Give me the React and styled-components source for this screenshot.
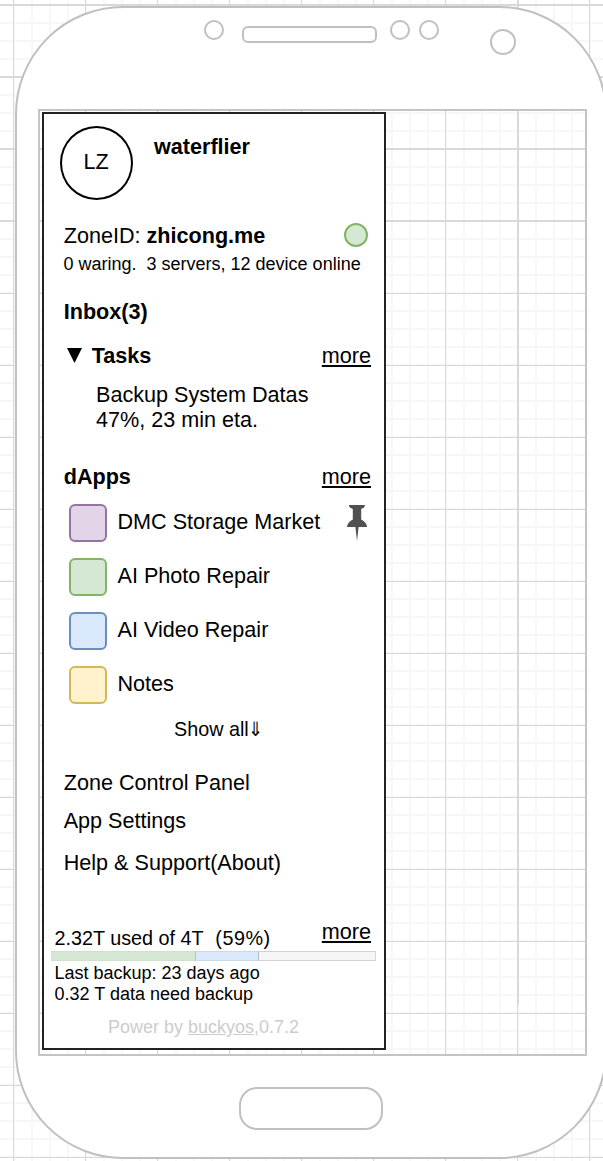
import React from "react";
import styled, { createGlobalStyle, css } from "styled-components";

const MAJOR = "#d9d9d9";
const MINOR = "#f7f7f7";
const OUTLINE = "#c0c0c0";

/* Drawing-board grid: 72px major cells split in four. x / y place the first major line;
   the rows down to heavyTo and the column beside heavyX are drawn two pixels thick. */
const grid = (x, y, heavyX, heavyTo) => css`
  background-color: #fff;
  background-image:
    linear-gradient(${MAJOR}, ${MAJOR}),
    repeating-linear-gradient(to bottom, ${MAJOR} 0 1px, transparent 1px 72px),
    linear-gradient(to right, ${MAJOR} 1px, transparent 1px),
    linear-gradient(to bottom, ${MAJOR} 1px, transparent 1px),
    linear-gradient(to right, ${MINOR} 2px, transparent 2px),
    linear-gradient(to bottom, ${MINOR} 2px, transparent 2px);
  background-size: 1px 894px, 100% ${heavyTo}px, 72px 72px, 72px 72px, 18px 18px, 18px 18px;
  background-position: ${heavyX}px 0, 0 ${y - 1}px, ${x}px 0, 0 ${y}px, ${x}px 0, 0 ${y - 1}px;
  background-repeat: no-repeat, no-repeat, repeat, repeat, repeat, repeat;
`;

const Global = createGlobalStyle`
  * { box-sizing: border-box; }
  body { margin: 0; overflow: hidden; background: #fff; }
`;

const Board = styled.main`
  width: 603px;
  height: 1161px;
  overflow: hidden;
  padding: 6px 0 0 15px;
  font-family: "Liberation Sans", Arial, sans-serif;
  font-size: 21.6px;
  line-height: 26px;
  color: #000;
  white-space: pre;
  ${grid(13, 5, 518, 230)}
`;

const Phone = styled.section`
  width: 592px;
  height: 1153px;
  border: 2px solid ${OUTLINE};
  border-radius: 108px;
  background: #fff;
  display: flex;
  flex-direction: column;
`;

const Sensors = styled.div`
  height: 101px;
  padding: 12px 0 0 187px;
  display: flex;
  align-items: flex-start;
`;

const Lens = styled.i`
  width: ${(p) => p.$size}px;
  height: ${(p) => p.$size}px;
  border: 2px solid ${OUTLINE};
  border-radius: 50%;
  margin: ${(p) => p.$top || 0}px 0 0 ${(p) => p.$gap || 0}px;
`;

const Speaker = styled.i`
  width: 135px;
  height: 17px;
  margin: 6px 0 0 18px;
  border: 2px solid ${OUTLINE};
  border-radius: 6px;
`;

const Screen = styled.div`
  width: 549px;
  height: 947px;
  margin-left: 21px;
  border: 2px solid #c4c4c4;
  padding: 1px 0 0 2px;
  ${grid(45, 38, 478, 100)}
`;

const HomeButton = styled.i`
  width: 144px;
  height: 43px;
  margin: 31px 0 0 222px;
  border: 2px solid ${OUTLINE};
  border-radius: 18px;
`;

const Drawer = styled.aside`
  width: 344px;
  height: 938px;
  border: 2px solid #222;
  background: #fff;
`;

const Profile = styled.header`
  height: 108.5px;
  padding: 12px 0 0 16px;
  display: flex;
  gap: 21px;
`;

const Avatar = styled.div`
  width: 73px;
  height: 74px;
  border: 2px solid #000;
  border-radius: 50%;
  padding-top: 21px;
  text-align: center;
  text-indent: -1px;
`;

const Name = styled.strong`
  padding-top: 7.5px;
`;

const Row = styled.div`
  display: flex;
  justify-content: space-between;
  align-items: flex-start;
  height: ${(p) => p.$h}px;
  padding: 0 ${(p) => p.$right ?? 13}px 0 ${(p) => p.$left ?? 19.7}px;
`;

const StatusDot = styled.i`
  width: 24px;
  height: 24px;
  border: 2px solid #82b366;
  border-radius: 50%;
  background: #d5e8d4;
`;

const Small = styled.div`
  height: ${(p) => p.$h}px;
  padding: ${(p) => p.$top || 0}px 0 0 ${(p) => p.$left}px;
  font-size: 18px;
  line-height: ${(p) => p.$line || 22}px;
`;

const TaskTitle = styled.strong`
  display: flex;
  gap: 10px;
  padding-left: 3px;
`;

const Triangle = styled.svg`
  width: 15px;
  height: 15px;
  margin-top: 5px;
`;

const More = styled.u`
  text-decoration-thickness: 1.5px;
  text-underline-offset: 2px;
`;

const Task = styled.div`
  height: 82px;
  padding-left: 52px;
  line-height: 25px;
`;

const AppRow = styled.div`
  display: flex;
  height: 54px;
  padding: 0 17px 0 24.5px;
`;

const AppIcon = styled.i`
  width: 38px;
  height: 38px;
  border: 2px solid ${(p) => p.$line};
  border-radius: 6px;
  background: ${(p) => p.$fill};
`;

const AppName = styled.span`
  flex: 1;
  padding: 5px 0 0 11px;
`;

const Pin = styled.svg`
  width: 20px;
  height: 36px;
  margin-top: 1px;
`;

const ShowAll = styled.div`
  height: 53px;
  margin-top: -3.5px;
  padding-left: 130px;
  font-size: 19.8px;
  line-height: 24px;
`;

const Arrow = styled.span`
  display: inline-block;
  width: 12px;
  margin-left: -2px;
  transform: scaleX(0.9);
`;

const Used = styled.span`
  padding-top: 7px;
  font-size: 19.8px;
  line-height: 24px;
`;

const Percent = styled.span`
  margin-left: 1px;
  letter-spacing: 0.5px;
`;

const Meter = styled.div`
  display: flex;
  width: 325px;
  height: 10px;
  margin-left: 7px;
  background: #f5f5f5;
  border: 1px solid #d4d4d4;
  border-left: 0;
`;

const Portion = styled.i`
  width: ${(p) => p.$w}px;
  margin: -1px 0;
  background: ${(p) => p.$fill};
  border: 1px solid ${(p) => p.$line};
  border-left: 0;
  border-right-color: #b5c0c4;
`;

const Credit = styled.footer`
  padding-left: 64px;
  font-size: 18px;
  line-height: 22px;
  color: #ccc;
`;

const apps = [
  { name: "DMC Storage Market", fill: "#e1d5e7", line: "#9673a6", pinned: true },
  { name: "AI Photo Repair", fill: "#d5e8d4", line: "#82b366" },
  { name: "AI Video Repair", fill: "#dae8fc", line: "#6c8ebf" },
  { name: "Notes", fill: "#fff2cc", line: "#d6b656" },
];

export default function App() {
  return (
    <Board>
      <Global />
      <Phone>
        <Sensors>
          <Lens $size={20} />
          <Speaker />
          <Lens $size={20} $gap={13} />
          <Lens $size={20} $gap={9} />
          <Lens $size={26} $top={9} $gap={51} />
        </Sensors>
        <Screen>
          <Drawer>
            <Profile>
              <Avatar>LZ</Avatar>
              <Name>waterflier</Name>
            </Profile>
            <Row $h={30.5} $right={16}>
              <span>ZoneID: <b>zhicong.me</b></span>
              <StatusDot />
            </Row>
            <Small $h={46} $left={19.5}>0 waring.  3 servers, 12 device online</Small>
            <Row $h={44}><b>Inbox(3)</b></Row>
            <Row $h={38.5}>
              <TaskTitle>
                <Triangle viewBox="0 0 15 15"><path d="M0 0H15L7.5 15Z" /></Triangle>
                Tasks
              </TaskTitle>
              <More>more</More>
            </Row>
            <Task>{"Backup System Datas\n47%, 23 min eta."}</Task>
            <Row $h={40.5}><b>dApps</b><More>more</More></Row>
            {apps.map((a) => (
              <AppRow key={a.name}>
                <AppIcon $fill={a.fill} $line={a.line} />
                <AppName>{a.name}</AppName>
                {a.pinned && (
                  <Pin viewBox="0 0 20 36">
                    <path fill="#505050" d="M2 0H17.8V1.2Q17.5 3 14.2 4V14.5Q19.5 17 20 22H11.6L10 36L8.4 22H0Q.5 17 5.8 14.5V4Q2.5 3 2 1.2Z" />
                  </Pin>
                )}
              </AppRow>
            ))}
            <ShowAll>Show all<Arrow>⇓</Arrow></ShowAll>
            <Row $h={38}>Zone Control Panel</Row>
            <Row $h={42}>App Settings</Row>
            <Row $h={69}>Help &amp; Support(About)</Row>
            <Row $h={32.5} $left={10.5}>
              <Used>2.32T used of 4T  <Percent>(59%)</Percent></Used>
              <More>more</More>
            </Row>
            <Meter>
              <Portion $w={145} $fill="#d5e8d4" $line="#cfe0ce" />
              <Portion $w={63} $fill="#dae8fc" $line="#ccd9ec" />
            </Meter>
            <Small $h={55} $left={10.5} $top={2} $line={21}>{"Last backup: 23 days ago\n0.32 T data need backup"}</Small>
            <Credit>Power by <u>buckyos</u>,0.7.2</Credit>
          </Drawer>
        </Screen>
        <HomeButton />
      </Phone>
    </Board>
  );
}
